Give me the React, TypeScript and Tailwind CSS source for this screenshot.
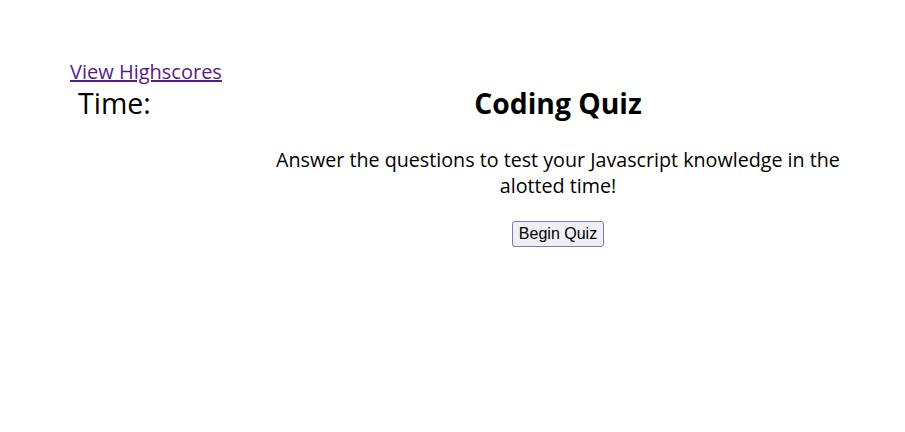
export default function App() {
  return (
    <div className="min-h-[432px] bg-white text-black" style={{ fontFamily: '"Open Sans", sans-serif' }}>
      <header className="pt-[59px] pl-[70px]">
        <a href="#" className="text-[20px] leading-[26px] text-[#551A8B] underline">
          View Highscores
        </a>
      </header>
      <div className="flex pl-[78px]">
        <div className="w-[192px] text-[28.5px] leading-[36px]">Time:</div>
        <main className="flex w-[576px] flex-col items-center text-center">
          <h1 className="text-[28.3px] font-bold leading-[36px]">Coding Quiz</h1>
          <p className="mt-[26px] text-[19.7px] leading-[26px]">
            Answer the questions to test your Javascript knowledge in the
            <br />
            alotted time!
          </p>
          <button
            className="mt-[22px] rounded-[3px] border border-[#8a74a8] bg-[#efeff5] px-[6px] py-[2px] text-[16px] leading-[20px]"
            style={{ fontFamily: '"Liberation Sans", Arial, sans-serif' }}
          >
            Begin Quiz
          </button>
        </main>
      </div>
    </div>
  );
}
